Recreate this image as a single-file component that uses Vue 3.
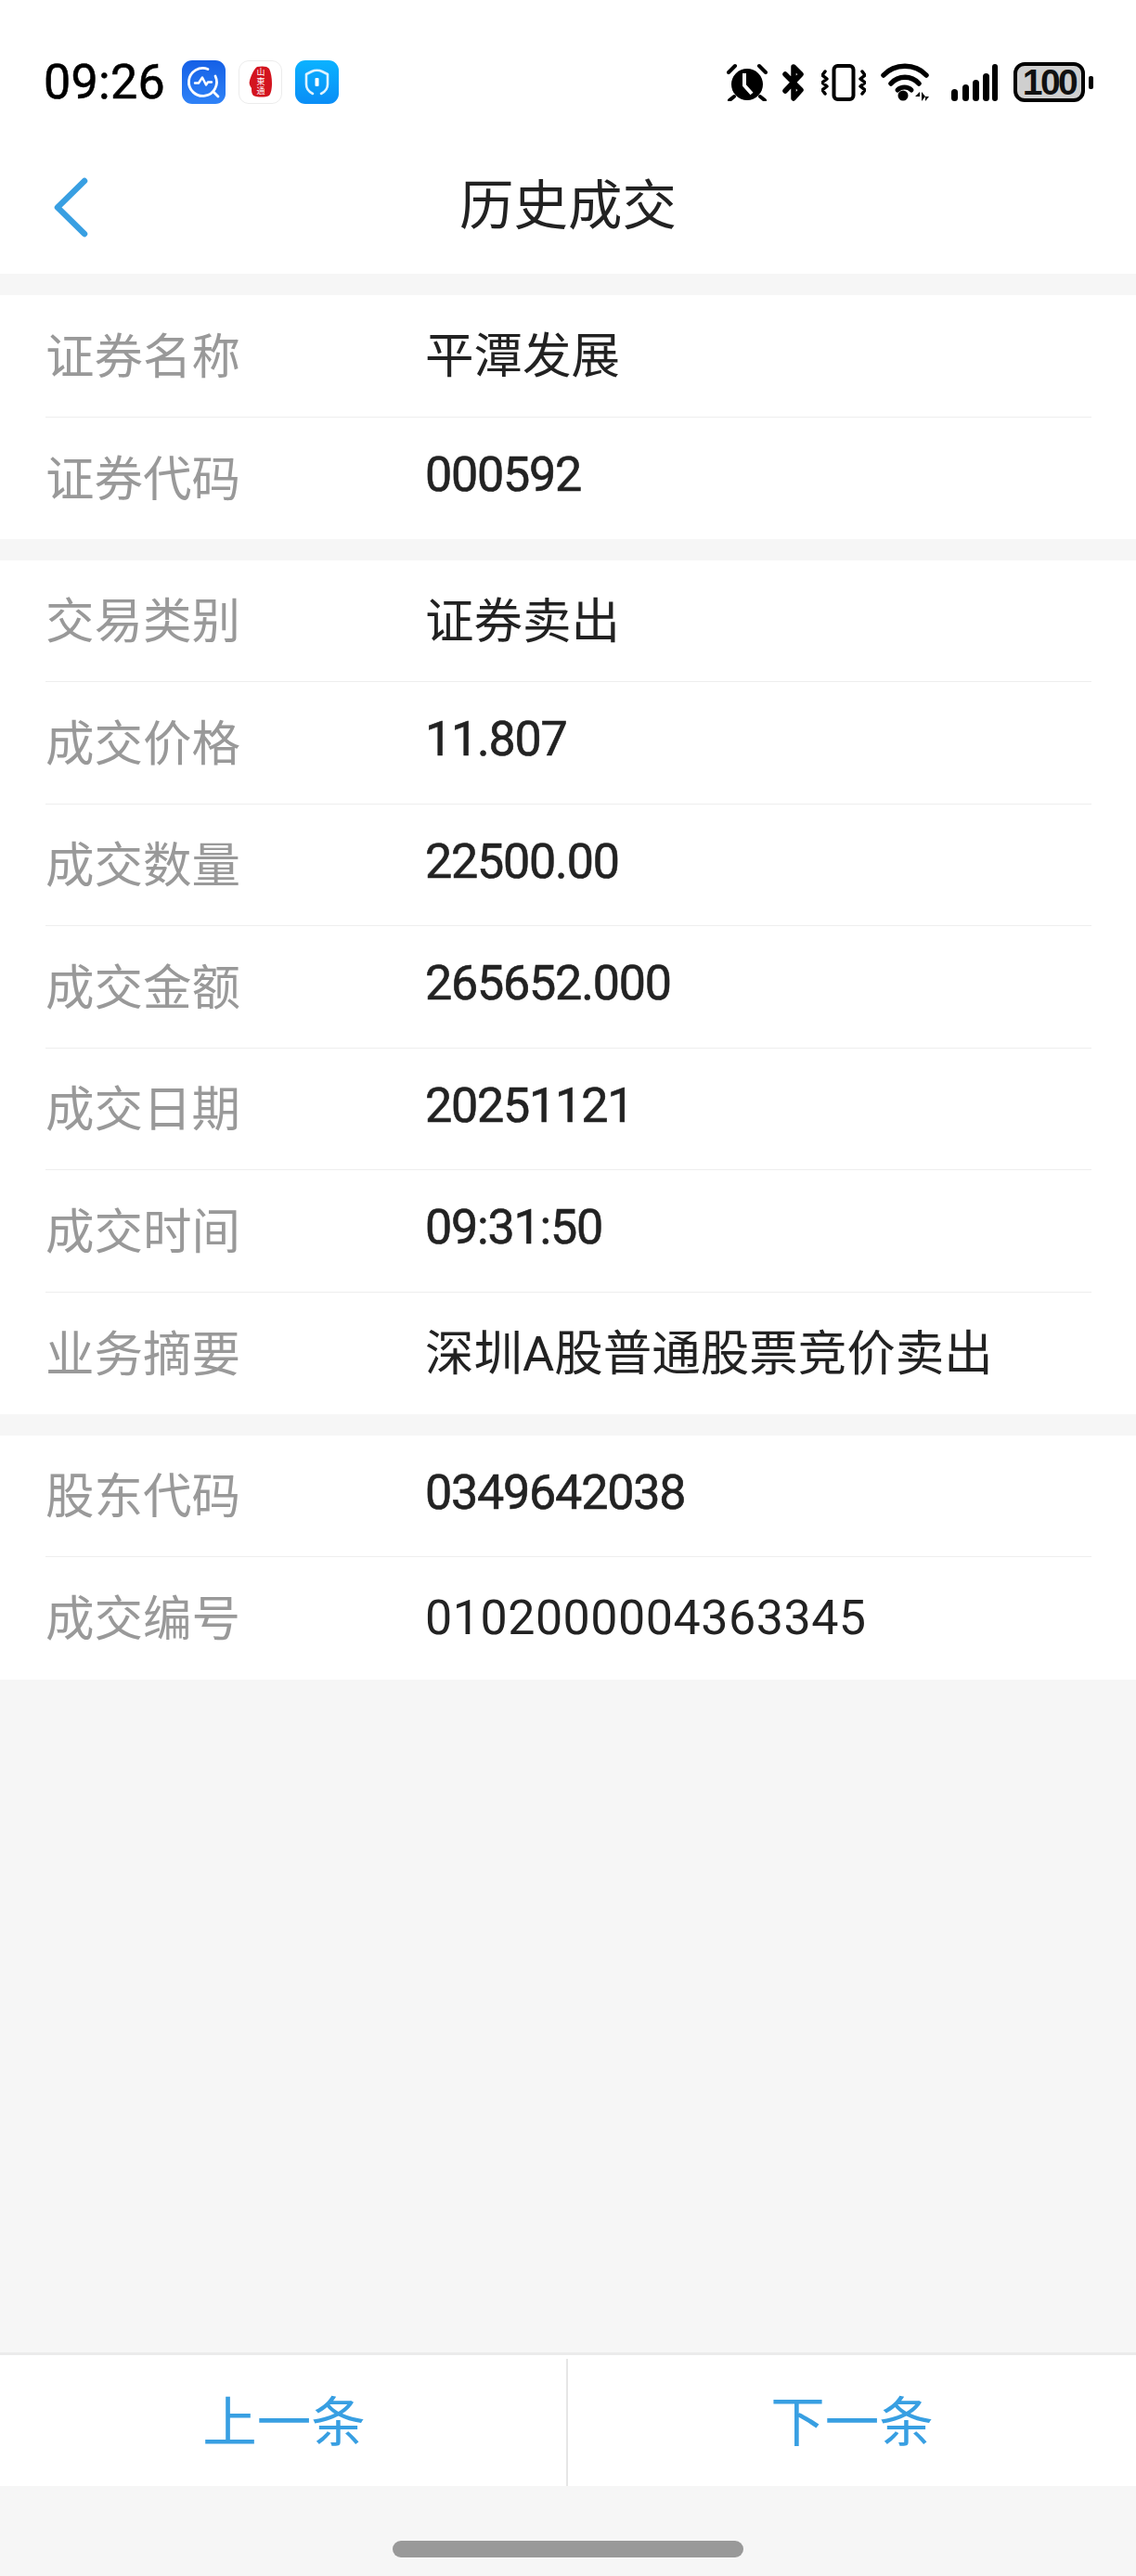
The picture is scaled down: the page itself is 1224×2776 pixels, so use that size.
<script setup>
const groups = [
  [
    { label: '证券名称', value: '平潭发展', cjk: true },
    { label: '证券代码', value: '000592' },
  ],
  [
    { label: '交易类别', value: '证券卖出', cjk: true },
    { label: '成交价格', value: '11.807' },
    { label: '成交数量', value: '22500.00' },
    { label: '成交金额', value: '265652.000' },
    { label: '成交日期', value: '20251121' },
    { label: '成交时间', value: '09:31:50' },
    { label: '业务摘要', value: '深圳A股普通股票竞价卖出', cjk: true },
  ],
  [
    { label: '股东代码', value: '0349642038' },
    { label: '成交编号', value: '0102000004363345', wide: true },
  ],
]
</script>

<template>
  <div class="page">
    <header class="top">
      <div class="status">
        <span class="clock">09:26</span>
        <svg class="app-icon" viewBox="0 0 47 47">
          <defs>
            <linearGradient id="blueA" x1="0" y1="0" x2="0" y2="1">
              <stop offset="0" stop-color="#1560e6" />
              <stop offset="1" stop-color="#2f82f7" />
            </linearGradient>
            <linearGradient id="blueB" x1="0" y1="0" x2="0" y2="1">
              <stop offset="0" stop-color="#0bb2ff" />
              <stop offset="1" stop-color="#0a8df6" />
            </linearGradient>
          </defs>
          <rect width="47" height="47" rx="11" fill="url(#blueA)" />
          <path d="M28 9.500A15 15 0 1 0 36 17M33.500 33.500L39 39" fill="none" stroke="#fff" stroke-width="2.800" stroke-linecap="round" />
          <path d="M14 24.500l4 0 4-6 4 8 2-3 4 0" fill="none" stroke="#fff" stroke-width="2.400" stroke-linecap="round" stroke-linejoin="round" />
        </svg>
        <svg class="app-icon" viewBox="0 0 47 47">
          <rect x=".5" y=".5" width="46" height="46" rx="10.5" fill="#fff" stroke="#ececec" />
          <path d="M20 7c5-1 11-1 13 2 2 4 3 10 3 16 0 5-1 11-3 13-4 2-12 2-17 0-2-2-2-5-2-8-2-3-3-5-2-8 1-4 4-12 8-15z" fill="#d3141f" />
          <text class="seal" x="24" y="16">山</text>
          <text class="seal" x="24" y="26">東</text>
          <text class="seal" x="24" y="36">通</text>
        </svg>
        <svg class="app-icon" viewBox="0 0 47 47">
          <rect width="47" height="47" rx="11" fill="url(#blueB)" />
          <path d="M18 12l-6 3v11c0 5 3 8 7 10M29 12l6 3v11c0 5-3 8-7 10M18 12c3-1.500 8-1.500 11 0" fill="none" stroke="#dff3ff" stroke-width="2.600" stroke-linecap="round" stroke-linejoin="round" />
          <rect x="21.500" y="19" width="4" height="9" rx="1" fill="#fff" />
        </svg>

        <div class="indicators">
          <svg class="alarm" viewBox="0 0 44 41">
            <circle cx="22" cy="23" r="17" fill="#000" />
            <path d="M19 11v13l8 9" fill="none" stroke="#fff" stroke-width="4" />
            <path d="M2 10L9 3M42 10L35 3M8 36l-5 4M36 36l5 4" stroke="#000" stroke-width="4" stroke-linecap="round" />
          </svg>
          <svg class="bluetooth" viewBox="0 0 24 40">
            <path d="M3 11L20 28L12 37V3L20 11L3 29" fill="none" stroke="#000" stroke-width="5.500" stroke-linejoin="round" stroke-linecap="round" />
          </svg>
          <svg class="vibrate" viewBox="0 0 48 40">
            <rect x="13.500" y="2" width="21" height="36" rx="4" fill="none" stroke="#000" stroke-width="4" />
            <path d="M4 8L1 12l5 4-5 4 5 4-5 4 3 4M44 8l3 4-5 4 5 4-5 4 5 4-3 4" fill="none" stroke="#000" stroke-width="3.500" stroke-linecap="round" stroke-linejoin="round" />
          </svg>
          <svg class="wifi" viewBox="0 0 52 41">
            <path d="M3 13C15 0 37 0 49 13M11 22C19 13 33 13 41 22" fill="none" stroke="#000" stroke-width="5.500" stroke-linecap="round" />
            <path d="M18 29C22 25 29 25 33 29" fill="none" stroke="#000" stroke-width="5" stroke-linecap="round" />
            <circle cx="24" cy="35" r="5.500" fill="#000" />
            <path d="M37 36l5-5v5zM44 31l0 10 4-5zM48 36h4l-4 5z" fill="#000" />
          </svg>
          <svg class="signal" viewBox="0 0 50 40">
            <rect x="0" y="27" width="7" height="13" rx="3.500" />
            <rect x="12" y="22" width="7" height="18" rx="3.500" />
            <rect x="23" y="17" width="7" height="23" rx="3.500" />
            <rect x="34" y="10" width="7" height="30" rx="3.500" />
            <rect x="44" y="0" width="6" height="40" rx="3" />
          </svg>
          <div class="battery">
            <span class="battery-box">100</span>
            <span class="battery-nub"></span>
          </div>
        </div>
      </div>

      <nav class="nav">
        <svg class="back" viewBox="0 0 39 65">
          <path d="M34 4L5 32.500L34 61" fill="none" stroke="#389fe2" stroke-width="6.500" stroke-linecap="round" stroke-linejoin="round" />
        </svg>
        <span class="title">历史成交</span>
      </nav>
    </header>

    <main class="content">
      <section v-for="(group, g) in groups" :key="g" class="group">
        <div v-for="row in group" :key="row.label" class="row">
          <span class="label">{{ row.label }}</span>
          <span :class="['value', { 'value--wide': row.wide, 'value--cjk': row.cjk }]">{{ row.value }}</span>
        </div>
      </section>
    </main>

    <footer class="pager">
      <button class="pager__btn" type="button">上一条</button>
      <button class="pager__btn pager__btn--next" type="button">下一条</button>
    </footer>

    <div class="gesture"><span class="gesture__bar"></span></div>
  </div>
</template>

<style scoped>
.page {
  width: 1224px;
  height: 2776px;
  display: flex;
  flex-direction: column;
  background: #f6f6f6;
  font-family: Roboto, "Noto Sans CJK SC", sans-serif;
  overflow: hidden;
}

.top {
  background: #fff;
  flex: 0 0 auto;
}

.status {
  height: 147px;
  padding: 30px 46px 0 47px;
  box-sizing: border-box;
  display: flex;
  align-items: center;
}

.clock {
  font-size: 52px;
  line-height: 60px;
  letter-spacing: 0.300px;
  -webkit-text-stroke: 0.6px #000;
  color: #000;
  width: 149px;
}

.app-icon {
  width: 47px;
  height: 47px;
  margin-right: 14px;
  flex: 0 0 auto;
}

.seal {
  font-family: "Noto Sans CJK SC", sans-serif;
  font-size: 9px;
  fill: #fff;
  text-anchor: middle;
}

.indicators {
  margin-left: auto;
  display: flex;
  align-items: center;
}

.indicators svg {
  flex: 0 0 auto;
}

.alarm {
  width: 44px;
  height: 41px;
  margin-right: 16px;
}

.bluetooth {
  width: 24px;
  height: 40px;
  margin-right: 18px;
}

.vibrate {
  width: 48px;
  height: 40px;
  margin-right: 16px;
}

.wifi {
  width: 52px;
  height: 41px;
  margin-right: 24px;
}

.signal {
  width: 50px;
  height: 40px;
  margin-right: 17px;
}

.battery {
  display: flex;
  align-items: center;
}

.battery-box {
  width: 77px;
  height: 43px;
  box-sizing: border-box;
  border: 4px solid #000;
  border-radius: 12px;
  background: #cfcfcf;
  color: #111;
  font-family: "Liberation Sans", sans-serif;
  font-weight: 700;
  font-size: 39px;
  letter-spacing: -2.500px;
  line-height: 35px;
  text-align: center;
}

.battery-nub {
  width: 5px;
  height: 14px;
  margin-left: 4px;
  border-radius: 2px;
  background: #000;
}

.nav {
  height: 148px;
  position: relative;
  display: flex;
  align-items: center;
  justify-content: center;
}

.back {
  position: absolute;
  left: 57px;
  top: 44px;
  width: 39px;
  height: 65px;
}

.title {
  font-size: 58.500px;
  line-height: 70px;
  margin-top: 2px;
  color: #222;
}

.content {
  flex: 1 1 auto;
  padding-top: 23px;
  display: flex;
  flex-direction: column;
  gap: 22.500px;
}

.group {
  background: #fff;
  padding: 0 48px 0 49px;
}

.row {
  height: 131.500px;
  box-sizing: border-box;
  display: flex;
  align-items: center;
  border-bottom: 1.500px solid #eeeeee;
}

.row:last-child {
  border-bottom: 0;
}

.label {
  width: 409px;
  flex: 0 0 auto;
  margin-top: -7px;
  font-family: "Noto Sans CJK SC", sans-serif;
  font-size: 52.500px;
  line-height: 62px;
  color: #999;
}

.value {
  font-size: 52px;
  line-height: 62px;
  color: #222;
  letter-spacing: -1.200px;
  -webkit-text-stroke: 0.6px #222;
  margin-top: -6px;
}

.value--wide {
  letter-spacing: 0.500px;
  -webkit-text-stroke: 0;
  margin-top: 0;
}

.value--cjk {
  font-size: 52.500px;
  letter-spacing: 0;
  -webkit-text-stroke: 0;
  margin-top: 2px;
}

.pager {
  flex: 0 0 auto;
  height: 144px;
  box-sizing: border-box;
  display: flex;
  background: #fff;
  border-top: 3px solid #ebebeb;
}

.pager__btn {
  flex: 1 1 50%;
  border: 0;
  padding: 0 0 6px;
  background: none;
  font-family: "Noto Sans CJK SC", sans-serif;
  font-size: 58.500px;
  color: #389fe2;
  position: relative;
}

.pager__btn--next::before {
  content: "";
  position: absolute;
  left: -2px;
  top: 4px;
  bottom: 0;
  width: 2px;
  background: #e6e6e6;
}

.gesture {
  flex: 0 0 97px;
  display: flex;
  justify-content: center;
  padding-top: 59px;
  box-sizing: border-box;
}

.gesture__bar {
  width: 378px;
  height: 18px;
  border-radius: 9px;
  background: #999;
}
</style>
